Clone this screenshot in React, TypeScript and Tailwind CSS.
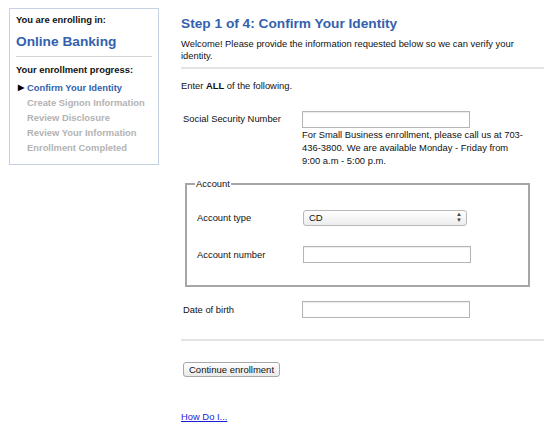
import { useState } from 'react';

const steps = [
  'Confirm Your Identity',
  'Create Signon Information',
  'Review Disclosure',
  'Review Your Information',
  'Enrollment Completed',
];

function TextBox({ className = '' }: { className?: string }) {
  return (
    <input
      type="text"
      className={`h-[17px] w-[168px] border border-[#b5b5b5] bg-white px-1 text-[11px] outline-none shadow-[inset_0_1px_1px_rgba(0,0,0,0.08)] ${className}`}
    />
  );
}

export default function App() {
  const [accountType, setAccountType] = useState('CD');

  return (
    <div className="flex min-h-[425px] w-[550px] bg-white text-[9.4px] leading-[12px] text-[#111] font-['Liberation_Sans',Arial,sans-serif]">
      {/* sidebar */}
      <div className="ml-[9px] mt-[8px] h-[157px] w-[150px] shrink-0 border border-[#c3d1e3] px-[6px] pt-[5px]">
        <div className="font-bold">You are enrolling in:</div>
        <div className="mt-[7px] text-[13.7px] leading-[18px] font-bold text-[#3461ad]">Online Banking</div>
        <div className="mt-[5px] border-t border-[#d4d4d4]" />
        <div className="mt-[7px] font-bold">Your enrollment progress:</div>
        <ul className="mt-[4px]">
          {steps.map((s, i) => (
            <li key={s} className="flex h-[15px] items-center whitespace-nowrap font-bold">
              <span className="w-[11px] pl-[2px] text-[8px] text-black">{i === 0 ? '▶' : ''}</span>
              <span className={i === 0 ? 'text-[#3461ad]' : 'text-[#b3b3b3]'}>{s}</span>
            </li>
          ))}
        </ul>
      </div>

      {/* main */}
      <div className="ml-[22px] mr-[6px] flex-1 pt-[15px]">
        <h1 className="text-[13.7px] leading-[17px] font-bold text-[#3461ad]">Step 1 of 4: Confirm Your Identity</h1>
        <p className="mt-[6px] pr-[14px]">
          Welcome! Please provide the information requested below so we can verify your identity.
        </p>
        <div className="mt-[5px] border-t-2 border-[#e3e3e3]" />
        <p className="mt-[11px]">
          Enter <b>ALL</b> of the following.
        </p>

        <div className="mt-[19px] flex pl-[2px]">
          <label className="w-[119px] pt-[2px]">Social Security Number</label>
          <div>
            <TextBox />
            <p className="mt-0 w-[224px] leading-[13px]">
              For Small Business enrollment, please call us at 703-436-3800. We are available Monday - Friday from 9:00 a.m - 5:00 p.m.
            </p>
          </div>
        </div>

        <fieldset className="ml-[4px] mt-[11px] w-[345px] border-2 border-[#a6a6a6] px-[10px] pb-[22px] pt-[20px]">
          <legend className="px-[1px] -ml-[2px]">Account</legend>
          <div className="flex items-center">
            <label className="w-[106px]">Account type</label>
            <div className="relative h-[16px] w-[164px]">
              <select
                value={accountType}
                onChange={(e) => setAccountType(e.target.value)}
                className="h-[16px] w-full appearance-none rounded-[3px] border border-[#b9b9b9] bg-gradient-to-b from-white to-[#ececec] pl-[5px] text-[9.5px] outline-none"
              >
                <option>CD</option>
                <option>Checking</option>
                <option>Savings</option>
              </select>
              <span className="pointer-events-none absolute right-[5px] top-[1px] text-[6px] leading-[6px] text-[#444]">
                ▲<br />▼
              </span>
            </div>
          </div>
          <div className="mt-[20px] flex items-center">
            <label className="w-[106px]">Account number</label>
            <TextBox />
          </div>
        </fieldset>

        <div className="mt-[14px] flex items-center pl-[2px]">
          <label className="w-[119px]">Date of birth</label>
          <TextBox />
        </div>

        <div className="mt-[21px] border-t-2 border-[#e3e3e3]" />

        <button className="ml-[2px] mt-[21px] h-[15px] rounded-[3px] border border-[#a8a8a8] bg-gradient-to-b from-white to-[#e9e9e9] px-[5px] text-[9.5px] leading-[13px] text-[#111]">
          Continue enrollment
        </button>

        <div className="mt-[34px]">
          <a href="#" className="text-[#1c1cd8] underline">How Do I...</a>
        </div>
      </div>
    </div>
  );
}
